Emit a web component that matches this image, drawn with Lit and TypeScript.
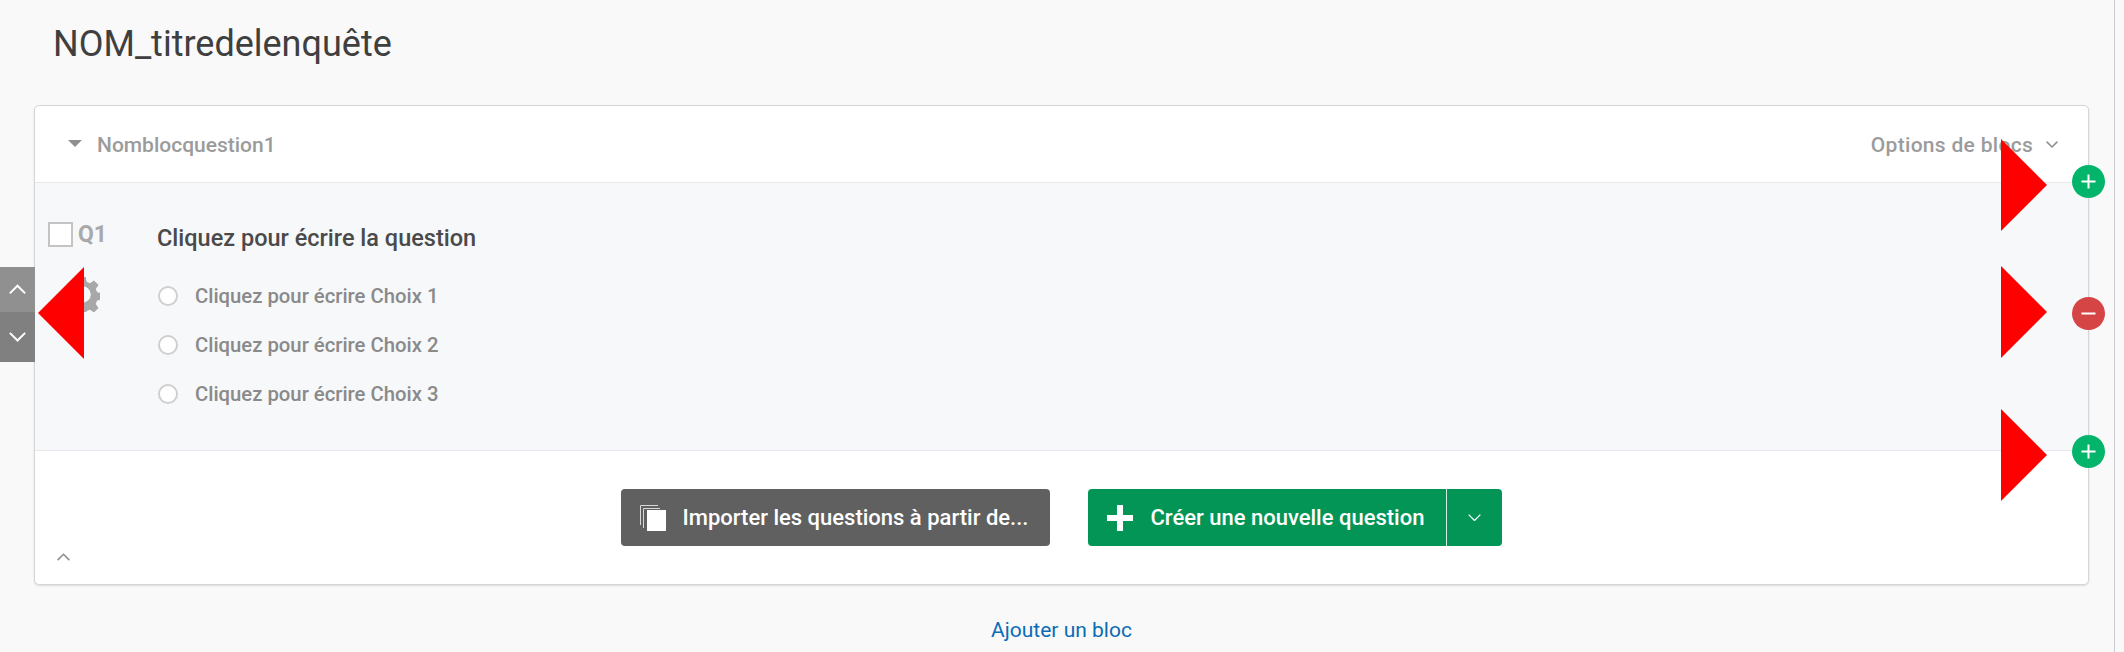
import { LitElement, html, css, svg } from "lit";
import { customElement } from "lit/decorators.js";

const chevron = (up: boolean, w: number, color: string, sw = 1.6) => html`<svg class="chev" width=${w} height=${w * 0.6} viewBox="0 0 20 12" fill="none" stroke=${color} stroke-width=${(sw * 20) / w}>
  ${up ? svg`<path d="M1 11 L10 2 L19 11"/>` : svg`<path d="M1 1 L10 10 L19 1"/>`}
</svg>`;

const gear = svg`<path fill-rule="evenodd" d="M14.5 0h7l1 5.2 3.6 1.5 4.4-3 4.900 4.900-3 4.400 1.500 3.600 5.100 1v7l-5.100 1-1.500 3.600 3 4.400-4.900 4.900-4.400-3-3.600 1.500-1 5.200h-7l-1-5.200-3.600-1.500-4.400 3-4.900-4.900 3-4.400-1.500-3.600-5.100-1v-7l5.100-1 1.500-3.600-3-4.400 4.900-4.900 4.400 3 3.600-1.500zM18 10a9 9 0 1 0 0 18 9 9 0 0 0 0-18z"/>`;

@customElement("app-root")
export class AppRoot extends LitElement {
  static styles = css`
    :host {
      display: block;
      height: 652px;
      overflow: hidden;
      position: relative;
      background: #f9f9f9;
      font-family: "Roboto", "Liberation Sans", sans-serif;
      color: #404040;
    }
    .main {
      width: 2115px;
      height: 652px;
      box-sizing: border-box;
      border-right: 1px solid #c9cdd2;
      padding-left: 34px;
    }
    h1 {
      margin: 0;
      height: 105px;
      box-sizing: border-box;
      padding: 22px 0 0 19px;
      font-size: 36px;
      line-height: 44px;
      font-weight: 400;
      color: #3f3f3f;
    }
    .card {
      width: 2055px;
      height: 480px;
      box-sizing: border-box;
      background: #fff;
      border: 1px solid #d6d6d6;
      border-radius: 5px;
      box-shadow: 0 1px 2px rgba(0, 0, 0, 0.12);
      display: flex;
      flex-direction: column;
    }
    .head {
      height: 77px;
      flex: none;
      box-sizing: border-box;
      border-bottom: 1px solid #e6e8eb;
      display: flex;
      align-items: center;
      padding: 2px 30px 0 33px;
      font-size: 21px;
      font-weight: 500;
      color: #9b9b9b;
    }
    .caret {
      width: 0;
      height: 0;
      border-left: 7px solid transparent;
      border-right: 7px solid transparent;
      border-top: 7px solid #8f8f8f;
      margin: -4px 15px 0 0;
    }
    .spacer {
      flex: 1;
    }
    .opts {
      display: flex;
      align-items: center;
      gap: 13px;
      letter-spacing: 0.3px;
    }
    .question {
      height: 268px;
      flex: none;
      box-sizing: border-box;
      background: #f7f8fa;
      border-bottom: 1px solid #e6e8eb;
      display: flex;
      padding: 39px 0 0 13px;
    }
    .side {
      width: 109px;
      flex: none;
    }
    .qid {
      display: flex;
      align-items: center;
      gap: 5px;
      font-size: 23px;
      line-height: 25px;
      font-weight: 700;
      color: #a9a9a9;
    }
    .box {
      width: 25px;
      height: 25px;
      box-sizing: border-box;
      background: #fff;
      border: 2px solid #c4c4c4;
    }
    .gear {
      display: block;
      margin: 30px 0 0 17px;
      fill: #a8a8a8;
    }
    .qtext {
      font-size: 23.5px;
      line-height: 30px;
      font-weight: 500;
      color: #4a4a4a;
      margin: 0 0 18px;
      padding-top: 1px;
    }
    .choice {
      display: flex;
      align-items: center;
      gap: 16px;
      height: 49px;
      font-size: 20.3px;
      font-weight: 500;
      color: #8a8a8a;
      margin-left: 2px;
    }
    .radio {
      width: 20px;
      height: 20px;
      box-sizing: border-box;
      border-radius: 50%;
      background: #fff;
      border: 2px solid #cfcfcf;
      margin-left: -1px;
      margin-right: 1px;
    }
    .foot {
      flex: 1;
      position: relative;
      display: flex;
      justify-content: center;
      gap: 38px;
      padding: 38px 1px 0 0;
    }
    .btn {
      height: 57px;
      box-sizing: border-box;
      border-radius: 4px;
      color: #fff;
      font-size: 22px;
      font-weight: 500;
      display: flex;
      align-items: center;
    }
    .import {
      width: 429px;
      background: #606060;
      padding-left: 19px;
      gap: 17px;
    }
    .create {
      width: 414px;
      background: #029555;
    }
    .create .lab {
      flex: 1;
      height: 100%;
      display: flex;
      align-items: center;
      gap: 18px;
      padding-left: 19px;
      border-right: 1px solid #d5ece0;
    }
    .create .drop {
      width: 55px;
      display: flex;
      justify-content: center;
    }
    .collapse {
      position: absolute;
      left: 22px;
      bottom: 23px;
      line-height: 0;
    }
    .add {
      text-align: center;
      font-size: 21px;
      color: #0b6cb5;
      padding-top: 32px;
      margin-left: -25px;
      line-height: 26px;
    }
    .mover {
      position: absolute;
      left: 0;
      top: 267px;
      width: 35px;
    }
    .mover div {
      display: flex;
      align-items: center;
      justify-content: center;
    }
    .mover .up {
      height: 45px;
      background: #909090;
    }
    .mover .down {
      height: 50px;
      background: #808080;
    }
    .dot {
      position: absolute;
      width: 33px;
      height: 33px;
      left: 2072px;
      border-radius: 50%;
      display: flex;
      align-items: center;
      justify-content: center;
    }
    .dot.plus {
      background: #03b46b;
    }
    .dot.minus {
      background: #d54545;
    }
    .marker {
      position: absolute;
    }
  `;

  private marker(x: number, y: number, left: boolean) {
    return html`<svg class="marker" style="left:${x}px;top:${y}px" width="46" height="92" viewBox="0 0 46 92">
      <polygon fill="#ff0000" points=${left ? "0,46 46,0 46,92" : "0,0 46,46 0,92"}></polygon>
    </svg>`;
  }

  private dot(y: number, plus: boolean) {
    return html`<div class="dot ${plus ? "plus" : "minus"}" style="top:${y}px">
      <svg width="15" height="15" viewBox="0 0 15 15" stroke="#fff" stroke-width="2">
        <path d=${plus ? "M0.5 7.5H14.5M7.5 0.5V14.5" : "M0.5 7.5H14.5"}></path>
      </svg>
    </div>`;
  }

  render() {
    return html`
      <div class="main">
        <h1>NOM_titredelenquête</h1>
        <section class="card">
          <div class="head">
            <span class="caret"></span>
            <span>Nomblocquestion1</span>
            <span class="spacer"></span>
            <span class="opts">Options de blocs ${chevron(false, 12, "#8f8f8f")}</span>
          </div>
          <div class="question">
            <div class="side">
              <div class="qid"><span class="box"></span>Q1</div>
              <svg class="gear" width="35" height="35" viewBox="0 0 36 38">${gear}</svg>
            </div>
            <div>
              <p class="qtext">Cliquez pour écrire la question</p>
              ${[1, 2, 3].map(
                (n) => html`<div class="choice"><span class="radio"></span>Cliquez pour écrire Choix ${n}</div>`
              )}
            </div>
          </div>
          <div class="foot">
            <div class="btn import">
              <svg width="26" height="26" viewBox="0 0 26 26">
                <path fill="none" stroke="#d8d8d8" stroke-width="1" d="M0.5 20V0.5H18M3.5 23V3.5H20"></path>
                <rect x="7" y="5" width="19" height="21" fill="#fff"></rect>
              </svg>
              <span>Importer les questions à partir de...</span>
            </div>
            <div class="btn create">
              <div class="lab">
                <svg width="26" height="26" viewBox="0 0 26 26" fill="#fff"><path d="M10 0h6v10h10v6H16v10h-6V16H0v-6h10z"></path></svg>
                <span>Créer une nouvelle question</span>
              </div>
              <div class="drop">${chevron(false, 13, "#fff", 1.3)}</div>
            </div>
            <span class="collapse">${chevron(true, 13, "#8f8f8f")}</span>
          </div>
        </section>
        <div class="add">Ajouter un bloc</div>
      </div>
      <div class="mover">
        <div class="up">${chevron(true, 17, "#fff", 2)}</div>
        <div class="down">${chevron(false, 17, "#fff", 2)}</div>
      </div>
      ${this.dot(165, true)} ${this.dot(297, false)} ${this.dot(435, true)}
      ${this.marker(38, 267, true)} ${this.marker(2001, 139, false)} ${this.marker(2001, 266, false)}
      ${this.marker(2001, 409, false)}
    `;
  }
}
